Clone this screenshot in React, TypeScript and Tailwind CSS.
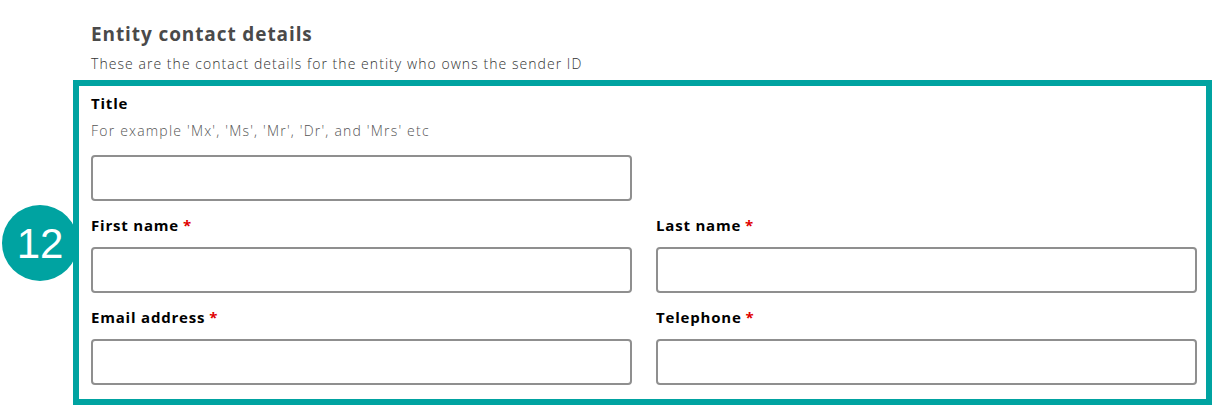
export default function App() {
    const teal = 'border-[#00a3a1]'
    return (
        <div className="relative w-[1213px] h-[405px] overflow-hidden bg-white font-['Open_Sans',sans-serif]">
            {/* Section heading */}
            <div className="pl-[91px] pt-[21px]">
                <h2 className="text-[19px] leading-[26px] font-bold tracking-[0.9px] text-[#4a4a4a]">Entity contact details</h2>
                <p className="mt-[7px] text-[14px] leading-[20px] font-light tracking-[1.05px] text-[#333]">
                    These are the contact details for the entity who owns the sender ID
                </p>
            </div>

            {/* Highlighted form area */}
            <div className={`mt-[6px] ml-[73px] mr-px border-[6px] ${teal} pl-3 pr-[9px] pt-[7px] pb-[14px]`}>
                <div className="grid grid-cols-2 gap-x-6">
                    <div>
                        <label className="block text-[15px] leading-[20px] font-bold tracking-[0.8px] text-black">Title</label>
                        <p className="mt-[8px] text-[14px] leading-[20px] font-light tracking-[1.2px] text-[#555]">
                            For example 'Mx', 'Ms', 'Mr', 'Dr', and 'Mrs' etc
                        </p>
                        <input className="mt-[14px] block w-full h-[46px] rounded border-2 border-[#8f8f8f] bg-white" />
                    </div>
                    <div />
                    <Field label="First name" />
                    <Field label="Last name" />
                    <Field label="Email address" />
                    <Field label="Telephone" />
                </div>
            </div>

            {/* Step badge */}
            <div className="absolute left-[2px] top-[205px] flex size-[76px] items-center justify-center rounded-full bg-[#00a3a1] font-['Liberation_Sans',sans-serif] text-[42px] text-white">
                12
            </div>
        </div>
    )
}

function Field({ label }: { label: string }) {
    return (
        <div className="mt-[14px]">
            <label className="block text-[15px] leading-[20px] font-bold text-black">
                <span className="tracking-[0.8px]">{label}</span> <span className="text-[#e00000]">*</span>
            </label>
            <input className="mt-[12px] block w-full h-[46px] rounded border-2 border-[#8f8f8f] bg-white" />
        </div>
    )
}
